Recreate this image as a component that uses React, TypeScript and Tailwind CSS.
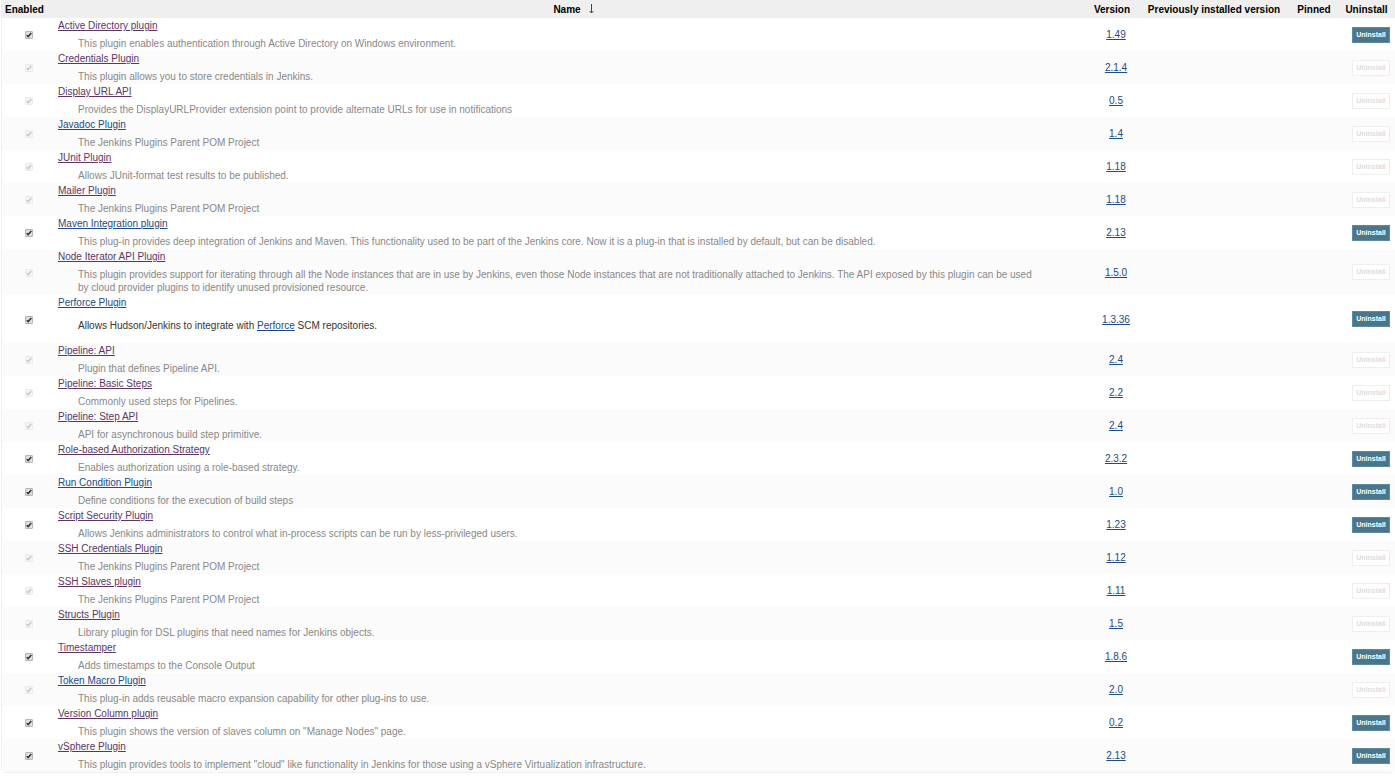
import React, { useState } from 'react';

type Plugin = {
    name: string;
    description: string;
    version: string;
    enabled?: boolean;
    visited?: boolean;
};

const plugins: Plugin[] = [
    { name: 'Active Directory plugin', description: 'This plugin enables authentication through Active Directory on Windows environment.', version: '1.49', enabled: true, visited: true },
    { name: 'Credentials Plugin', description: 'This plugin allows you to store credentials in Jenkins.', version: '2.1.4', visited: true },
    { name: 'Display URL API', description: 'Provides the DisplayURLProvider extension point to provide alternate URLs for use in notifications', version: '0.5', visited: true },
    { name: 'Javadoc Plugin', description: 'The Jenkins Plugins Parent POM Project', version: '1.4' },
    { name: 'JUnit Plugin', description: 'Allows JUnit-format test results to be published.', version: '1.18', visited: true },
    { name: 'Mailer Plugin', description: 'The Jenkins Plugins Parent POM Project', version: '1.18', visited: true },
    { name: 'Maven Integration plugin', description: 'This plug-in provides deep integration of Jenkins and Maven. This functionality used to be part of the Jenkins core. Now it is a plug-in that is installed by default, but can be disabled.', version: '2.13', enabled: true },
    { name: 'Node Iterator API Plugin', description: 'This plugin provides support for iterating through all the Node instances that are in use by Jenkins, even those Node instances that are not traditionally attached to Jenkins. The API exposed by this plugin can be used by cloud provider plugins to identify unused provisioned resource.', version: '1.5.0', visited: true },
    { name: 'Perforce Plugin', description: '', version: '1.3.36', enabled: true },
    { name: 'Pipeline: API', description: 'Plugin that defines Pipeline API.', version: '2.4', visited: true },
    { name: 'Pipeline: Basic Steps', description: 'Commonly used steps for Pipelines.', version: '2.2', visited: true },
    { name: 'Pipeline: Step API', description: 'API for asynchronous build step primitive.', version: '2.4', visited: true },
    { name: 'Role-based Authorization Strategy', description: 'Enables authorization using a role-based strategy.', version: '2.3.2', enabled: true, visited: true },
    { name: 'Run Condition Plugin', description: 'Define conditions for the execution of build steps', version: '1.0', enabled: true },
    { name: 'Script Security Plugin', description: 'Allows Jenkins administrators to control what in-process scripts can be run by less-privileged users.', version: '1.23', enabled: true, visited: true },
    { name: 'SSH Credentials Plugin', description: 'The Jenkins Plugins Parent POM Project', version: '1.12', visited: true },
    { name: 'SSH Slaves plugin', description: 'The Jenkins Plugins Parent POM Project', version: '1.11', visited: true },
    { name: 'Structs Plugin', description: 'Library plugin for DSL plugins that need names for Jenkins objects.', version: '1.5', visited: true },
    { name: 'Timestamper', description: 'Adds timestamps to the Console Output', version: '1.8.6', enabled: true, visited: true },
    { name: 'Token Macro Plugin', description: 'This plug-in adds reusable macro expansion capability for other plug-ins to use.', version: '2.0' },
    { name: 'Version Column plugin', description: 'This plugin shows the version of slaves column on "Manage Nodes" page.', version: '0.2', enabled: true, visited: true },
    { name: 'vSphere Plugin', description: 'This plugin provides tools to implement "cloud" like functionality in Jenkins for those using a vSphere Virtualization infrastructure.', version: '2.13', enabled: true, visited: true },
];

const PluginRow: React.FC<{ plugin: Plugin }> = ({ plugin }) => {
    const [checked, setChecked] = useState(true);
    const locked = !plugin.enabled;

    return (
        <tr className="odd:bg-white even:bg-[#fbfbfb]">
            <td className="pl-0.5 text-center align-middle">
                <label className="relative inline-flex align-middle">
                    <input
                        type="checkbox"
                        aria-label={`Enable ${plugin.name}`}
                        checked={checked}
                        disabled={locked}
                        onChange={() => setChecked(!checked)}
                        className="peer size-2 appearance-none rounded-[1px] border border-[#b5b5b5] bg-[#dedede] disabled:border-[#ebebeb] disabled:bg-[#f5f5f5]"
                    />
                    <svg
                        className="pointer-events-none absolute inset-0 hidden size-2 text-[#333333] peer-checked:block peer-disabled:text-[#c8c8c8]"
                        viewBox="0 0 8 8"
                        fill="none"
                        aria-hidden="true"
                    >
                        <path stroke="currentColor" strokeWidth="1.5" d="M1.7 4.2 3.2 5.6 6.3 2" />
                    </svg>
                </label>
            </td>
            <td className="py-px pl-1 pr-2 text-left align-middle">
                <a href="#" className={`underline ${plugin.visited ? 'text-[#5c3566]' : 'text-[#204a87]'}`}>{plugin.name}</a>
                {plugin.description ? (
                    <div className="mt-[5px] pl-5 pr-10 text-[#888888]">{plugin.description}</div>
                ) : (
                    <p className="mb-2.5 mt-2.5 pl-5 text-[#333333]">
                        Allows Hudson/Jenkins to integrate with <a href="#" className="text-[#204a87] underline">Perforce</a> SCM repositories.
                    </p>
                )}
            </td>
            <td className="pl-2 text-center align-middle">
                <a href="#" className="text-[#204a87] underline">{plugin.version}</a>
            </td>
            <td></td>
            <td></td>
            <td className="pr-[5px] text-right align-middle">
                <button
                    type="button"
                    disabled={locked}
                    className="h-4 w-[38px] border border-[#5a8ba0] bg-[#4b758b] align-middle text-[7px] leading-3 font-bold text-white disabled:border-[#eeeeee] disabled:bg-white disabled:text-[#dddddd]"
                >
                    Uninstall
                </button>
            </td>
        </tr>
    );
};

const App: React.FC = () => {
    return (
        <main className="bg-white pl-px font-['Liberation_Sans',Arial,sans-serif] text-[10px] leading-[13px] text-[#333333]">
            <table className="w-full border-separate border-spacing-0 rounded-b-sm border-b border-l border-[#efefef]">
                <thead>
                    <tr className="h-[18px] bg-[#efefef] text-black">
                        <th className="w-[52px] px-[3px] text-left">Enabled</th>
                        <th className="pl-2">
                            <button type="button" className="inline-flex items-center gap-2 font-bold">
                                Name
                                <svg className="h-2.5 w-1.5" viewBox="0 0 6 10" fill="none" role="img" aria-label="sorted descending">
                                    <path stroke="#444444" d="M2.5 0v9M.5 7l2 2 2-2" />
                                </svg>
                            </button>
                        </th>
                        <th className="w-[52px]">Version</th>
                        <th className="w-[152px]">Previously installed version</th>
                        <th className="w-12">Pinned</th>
                        <th className="w-[57px]">Uninstall</th>
                    </tr>
                </thead>
                <tbody>
                    {plugins.map((plugin) => (
                        <PluginRow key={plugin.name} plugin={plugin} />
                    ))}
                </tbody>
            </table>
        </main>
    );
};

export default App;
